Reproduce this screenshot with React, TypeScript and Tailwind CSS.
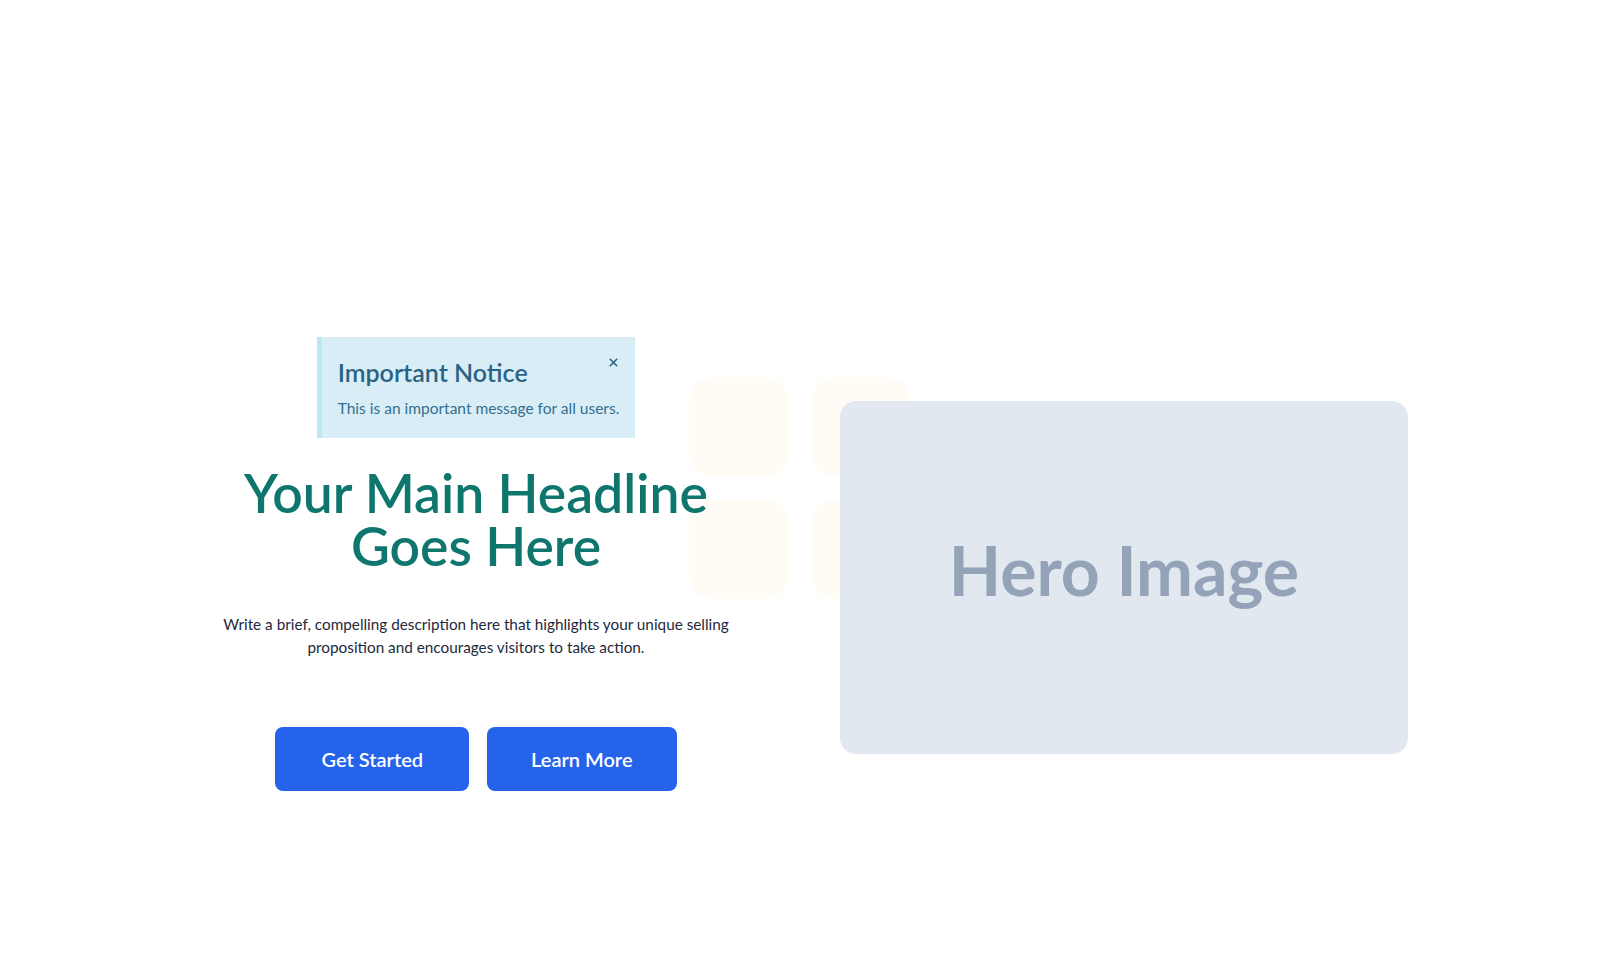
import { X } from "lucide-react";

const Notice = () => (
	<div className="relative w-fit border-l-[5px] border-[#bce8f1] bg-[#d9edf7] pb-[18px] pl-4 pr-4 pt-[19px] text-left text-[#31708f]">
		<button className="absolute right-[15px] top-[19px] text-[#2a6485]" aria-label="Close">
			<X className="size-[13px]" strokeWidth={3} />
		</button>
		<h3 className="text-[25px] font-semibold leading-8 text-[#2a6485]">Important Notice</h3>
		<p className="mt-2 text-[15.5px] leading-6">This is an important message for all users.</p>
	</div>
);

export default function App() {
	return (
		<div className="min-h-screen bg-white font-['Lato',sans-serif]">
			<section className="mx-auto max-w-7xl px-8 pt-[337px]">
				<div className="relative grid grid-cols-2 items-start gap-20">
					{/* background decoration */}
					<div className="absolute left-[497px] top-[40px] grid grid-cols-2 gap-[22px]">
						<div className="size-[100px] rounded-3xl bg-[#fefcf4]" />
						<div className="size-[100px] rounded-3xl bg-[#fefcf4]" />
						<div className="size-[100px] rounded-3xl bg-[#fefcf4]" />
						<div className="size-[100px] rounded-3xl bg-[#fefcf4]" />
					</div>

					<div className="relative flex flex-col items-center text-center">
						<Notice />
						<h1 className="mt-[28px] text-[53.5px] font-semibold leading-[53px] text-[#0f766e]">
							Your Main Headline
							<br />
							Goes Here
						</h1>
						<p className="mt-[41px] text-[15.3px] leading-[23px] text-[#1e293b]">
							Write a brief, compelling description here that highlights your unique selling
							<br />
							proposition and encourages visitors to take action.
						</p>
						<div className="mt-[68px] flex gap-[18px]">
							<button className="rounded-lg bg-[#2563eb] px-[46px] py-[18px] text-xl font-semibold leading-7 text-white">
								Get Started
							</button>
							<button className="rounded-lg bg-[#2563eb] px-[44px] py-[18px] text-xl font-semibold leading-7 text-white">
								Learn More
							</button>
						</div>
					</div>

					<div className="relative mt-16 flex h-[353px] items-center justify-center rounded-2xl bg-[#e2e8f0] pb-4">
						<span className="text-[68px] font-bold text-[#94a3b8]">Hero Image</span>
					</div>
				</div>
			</section>
		</div>
	);
}
